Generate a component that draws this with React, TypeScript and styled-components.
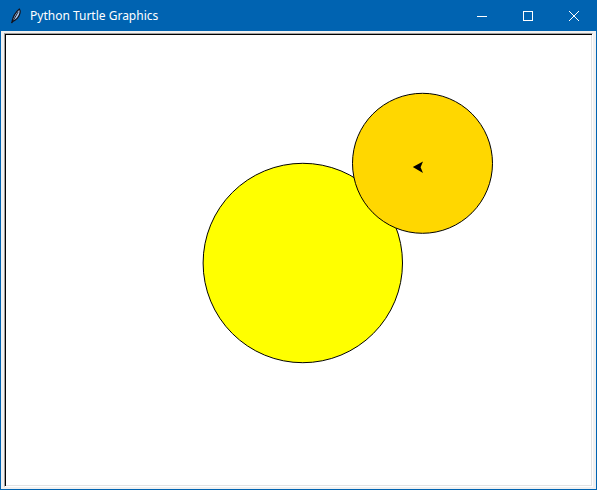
import styled, { createGlobalStyle } from 'styled-components';

const GlobalStyle = createGlobalStyle`
	html, body {
		margin: 0;
		padding: 0;
		background: #ffffff;
	}
	#root {
		width: 597px;
		height: 490px;
	}
`;

const Window = styled.div`
	width: 597px;
	height: 490px;
	box-sizing: border-box;
	display: flex;
	flex-direction: column;
	border: 1px solid #0063b1;
	border-top: none;
	background: #f0f0f0;
	overflow: hidden;
`;

const TitleBar = styled.div`
	height: 31px;
	flex: none;
	margin: 0 -1px;
	display: flex;
	align-items: center;
	background: #0063b1;
	color: #ffffff;
	font-family: 'Noto Sans', 'Open Sans', sans-serif;
	font-size: 12px;
`;

const AppIcon = styled.svg`
	width: 16px;
	height: 16px;
	margin: 0 6px 0 8px;
	flex: none;
`;

const Title = styled.span`
	flex: 1;
	padding-bottom: 1px;
	white-space: nowrap;
`;

const Controls = styled.div`
	display: flex;
	height: 100%;
`;

const ControlButton = styled.div`
	width: 46px;
	height: 100%;
	display: flex;
	align-items: center;
	justify-content: center;
`;

const Body = styled.div`
	flex: 1;
	display: flex;
	padding: 2px 3px 2px 3px;
`;

const Canvas = styled.div`
	flex: 1;
	display: flex;
	background: #ffffff;
	border-style: solid;
	border-width: 1px;
	border-color: #a0a0a0 #ffffff #ffffff #a0a0a0;
	box-shadow: inset 1px 1px 0 #000000, inset -1px -1px 0 #e3e3e3;
	padding: 1px;
`;

const Drawing = styled.svg`
	flex: 1;
	display: block;
`;

const Glyph = ({ children }: { children: React.ReactNode }) => (
	<svg width="12" height="12" viewBox="0 0 12 12" fill="none" stroke="#ffffff" strokeWidth="1">
		{children}
	</svg>
);

const App = () => {
	return (
		<>
			<GlobalStyle />
			<Window>
				<TitleBar>
					<AppIcon viewBox="0 0 16 16">
						<path
							d="M3.6 15 C4.6 10 6.6 4.8 11.4 1 C13 3 12 7.2 9.4 10.2 C7.8 12 6.2 12.8 4.4 13.6 Z"
							fill="#a9c8ee"
							stroke="#10101c"
							strokeWidth="1.2"
						/>
						<path d="M4 14.6 L10.2 3.8" stroke="#10101c" strokeWidth="0.9" />
					</AppIcon>
					<Title>Python Turtle Graphics</Title>
					<Controls>
						<ControlButton>
							<Glyph>
								<path d="M1 6.5 H11" />
							</Glyph>
						</ControlButton>
						<ControlButton>
							<Glyph>
								<rect x="1.5" y="1.5" width="9" height="9" />
							</Glyph>
						</ControlButton>
						<ControlButton>
							<Glyph>
								<path d="M1 1 L11 11 M11 1 L1 11" />
							</Glyph>
						</ControlButton>
					</Controls>
				</TitleBar>
				<Body>
					<Canvas>
						<Drawing>
							<circle cx="296.8" cy="228" r="99.7" fill="#ffff00" stroke="#000000" strokeWidth="1" />
							<circle cx="416.5" cy="128.3" r="70" fill="#ffd700" stroke="#000000" strokeWidth="1" />
							<polygon points="406.8,132 417,126.5 414.6,132.3 417,138" fill="#000000" />
						</Drawing>
					</Canvas>
				</Body>
			</Window>
		</>
	);
};

export default App;
